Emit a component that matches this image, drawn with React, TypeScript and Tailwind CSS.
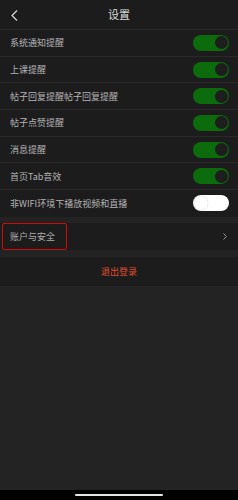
import React from 'react';

const font = { fontFamily: '"Noto Sans CJK SC", "Noto Sans", sans-serif' };

interface Item {
  label: string;
  on: boolean;
}

const items: Item[] = [
  { label: '系统通知提醒', on: true },
  { label: '上课提醒', on: true },
  { label: '帖子回复提醒帖子回复提醒', on: true },
  { label: '帖子点赞提醒', on: true },
  { label: '消息提醒', on: true },
  { label: '首页Tab音效', on: true },
  { label: '非WIFI环境下播放视频和直播', on: false },
];

const Toggle = ({ on }: { on: boolean }) => {
  if (on) {
    return (
      <div className="flex h-[16px] w-[36px] items-center justify-end rounded-full bg-[#0c6b0c] p-[1.5px]">
        <div className="h-[13px] w-[13px] rounded-full bg-[#1e1e1e]" />
      </div>
    );
  }
  return (
    <div className="flex h-[16px] w-[36px] items-center justify-start rounded-full bg-white p-[1px]">
      <div className="h-[14px] w-[14px] rounded-full bg-white shadow-[0_0_1px_rgba(0,0,0,0.25)]" />
    </div>
  );
};

export default function App() {
  return (
    <div className="flex h-[500px] w-[238px] flex-col bg-[#232323]" style={font}>
      {/* 顶栏 */}
      <div className="relative flex h-[30px] shrink-0 items-center justify-center border-b border-[#292929] bg-[#1c1c1c]">
        <svg className="absolute left-[11px] top-[10px]" width="7" height="11" viewBox="0 0 7 11">
          <path d="M6 0.5 L1 5.5 L6 10.5" fill="none" stroke="#d8d8d8" strokeWidth="1.2" />
        </svg>
        <span className="text-[11px] text-[#dcdcdc]">设置</span>
      </div>

      {/* 开关列表 */}
      <div className="flex flex-col bg-[#1c1c1c]">
        {items.map((item, i) => (
          <div
            key={i}
            className={`flex h-[26.7px] items-center justify-between pl-[10px] pr-[9px] ${
              i < items.length - 1 ? 'border-b border-[#292929]' : ''
            }`}
          >
            <span className="text-[9px] leading-none text-[#b4b4b4]">{item.label}</span>
            <Toggle on={item.on} />
          </div>
        ))}
      </div>

      {/* 账户与安全 */}
      <div className="relative mt-[6px] flex h-[27px] items-center justify-between bg-[#1c1c1c] pl-[10px] pr-[11px]">
        <span className="text-[9px] leading-none text-[#ababab]">账户与安全</span>
        <svg width="4" height="7" viewBox="0 0 4 7">
          <path d="M0.5 0.5 L3.5 3.5 L0.5 6.5" fill="none" stroke="#9a9a9a" strokeWidth="1" />
        </svg>
        <div className="absolute left-[2px] top-0 h-[27px] w-[65px] rounded-[2px] border border-[#d10a0a]" />
      </div>

      {/* 退出登录 */}
      <div className="mt-[7px] flex h-[29px] items-center justify-center bg-[#1c1c1c]">
        <span className="text-[9px] leading-none text-[#e0502a]">退出登录</span>
      </div>

      <div className="flex-1" />

      {/* 底部指示条 */}
      <div className="flex h-[10px] shrink-0 items-center justify-center bg-black">
        <div className="h-[2px] w-[88px] rounded-full bg-[#e8e8e8]" />
      </div>
    </div>
  );
}
